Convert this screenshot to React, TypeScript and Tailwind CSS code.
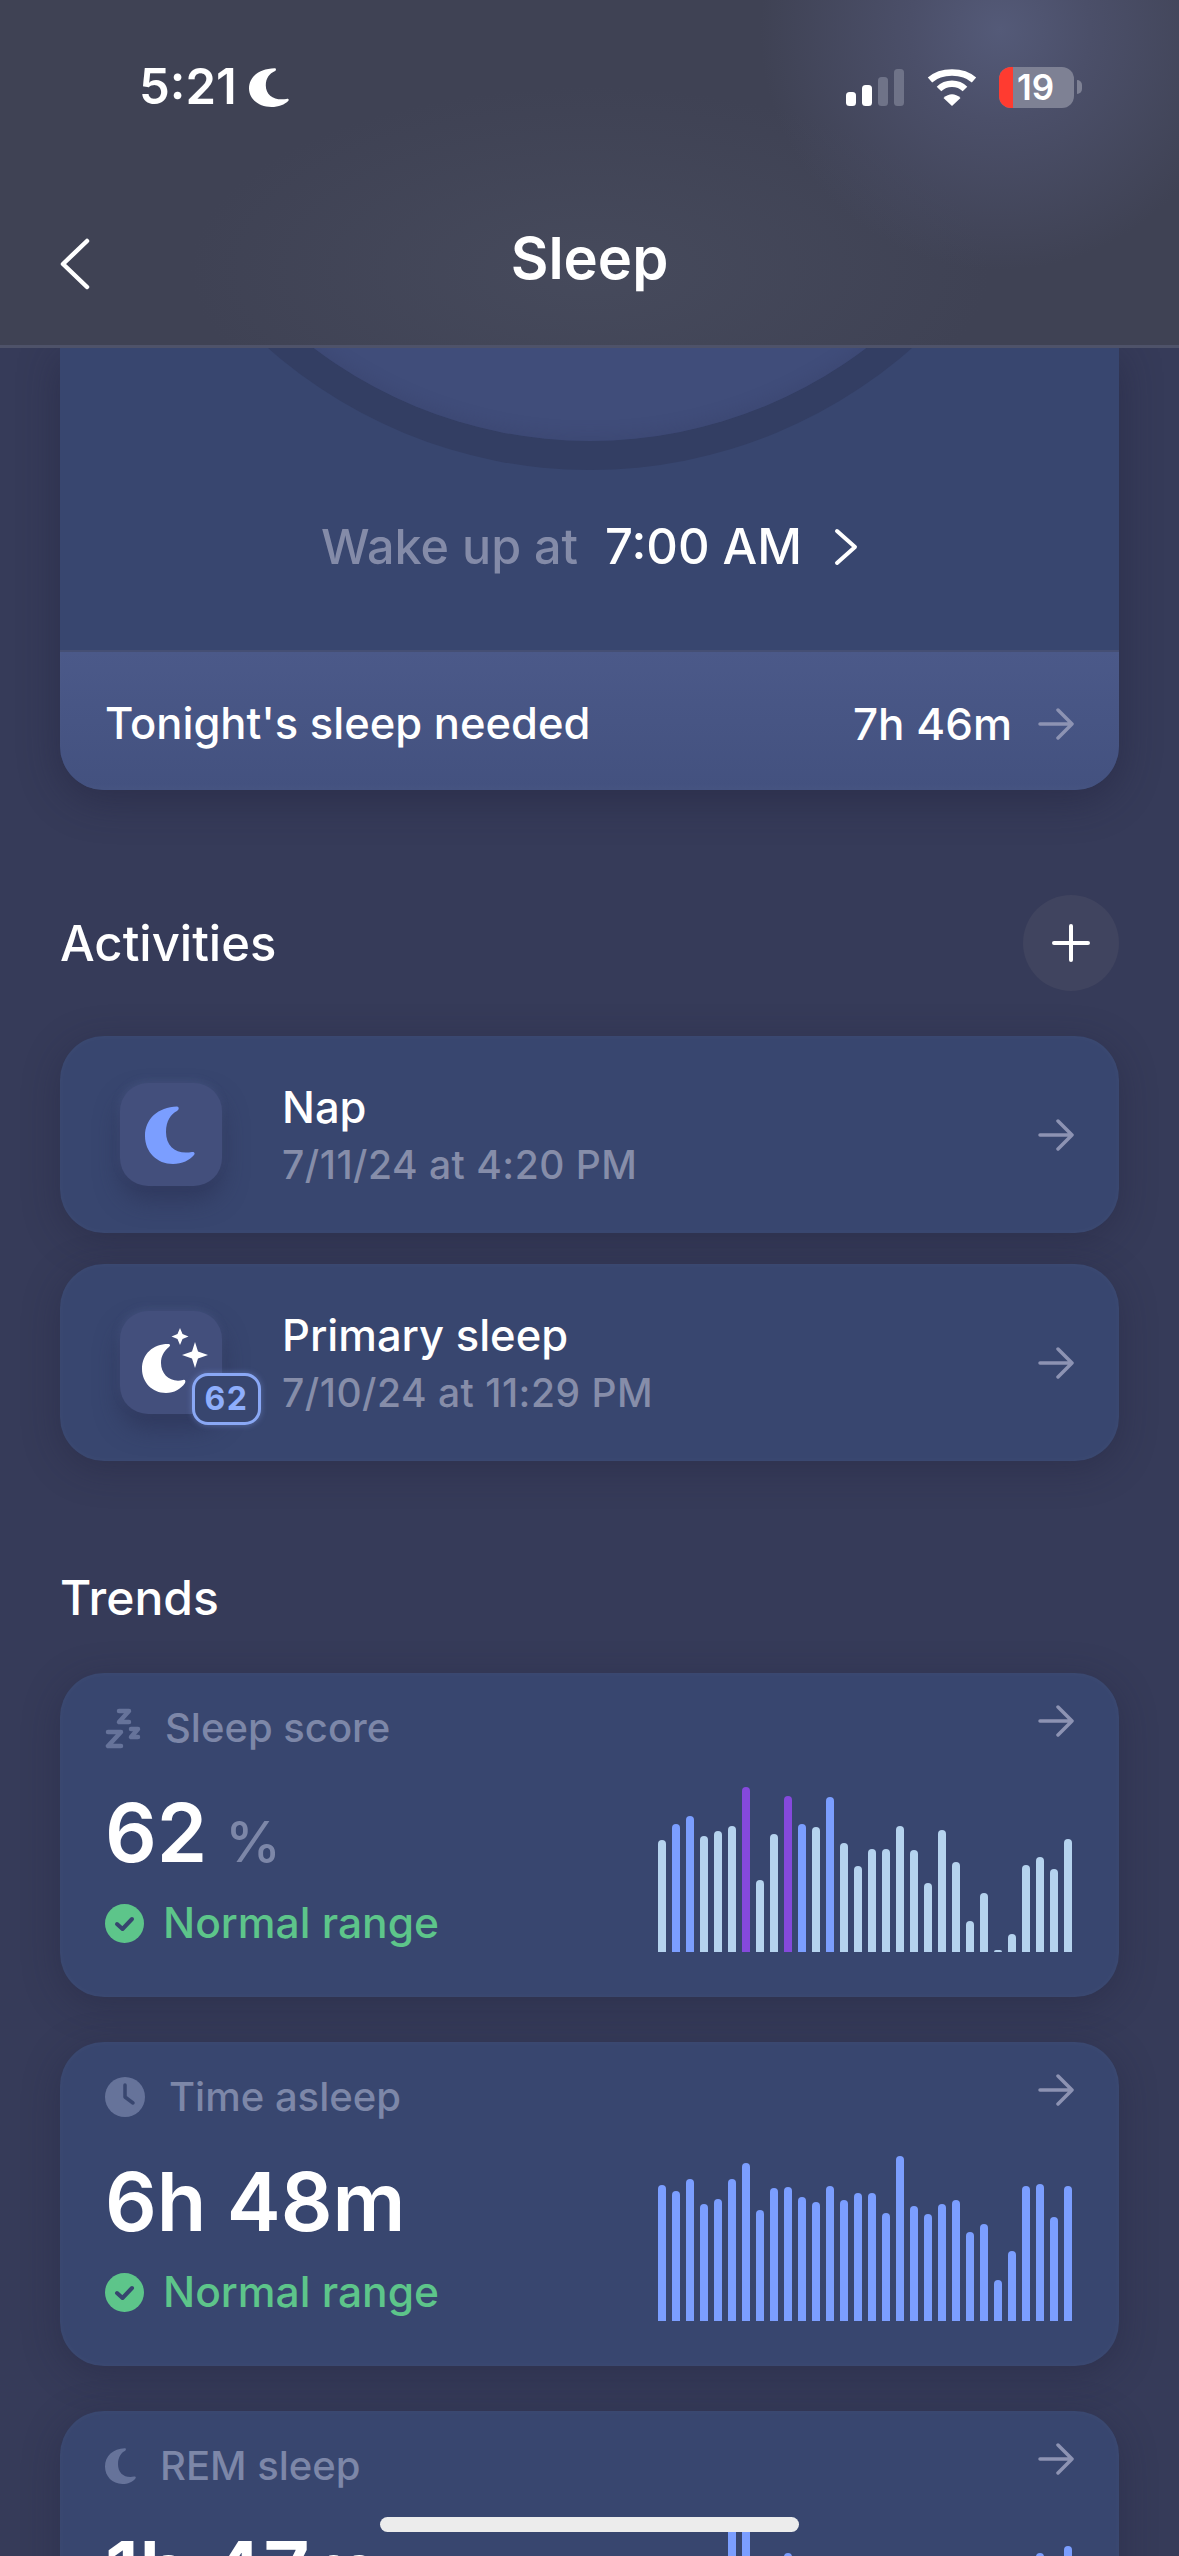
import type { JSX, ReactNode } from 'react'

const SCORE_BARS = [112, 128, 136, 116, 121, 126, 165, 72, 118, 156, 128, 125, 155, 109, 86, 103, 103, 126, 102, 69, 122, 90, 31, 59, 2, 18, 87, 95, 83, 113]
const SCORE_BLUE = [1, 2, 10, 12]
const SCORE_PURPLE = [6, 9]
const ASLEEP_BARS = [136, 130, 142, 117, 122, 142, 158, 111, 133, 134, 124, 119, 135, 121, 128, 128, 108, 165, 115, 107, 117, 121, 89, 97, 41, 70, 135, 137, 104, 135]
const REM_BARS = [90, 100, 80, 110, 95, 165, 165, 70, 100, 137, 90, 85, 100, 70, 110, 90, 80, 100, 95, 60, 80, 100, 50, 70, 60, 90, 110, 137, 80, 144]

function BarChart({ bars, colorAt }: { bars: number[]; colorAt: (i: number) => string }): JSX.Element {
  return (
    <div className="flex h-[165px] items-end gap-[5.5px]">
      {bars.map((h, i) => (
        <div key={i} className={`w-[8.5px] rounded-t-full ${colorAt(i)}`} style={{ height: h }} />
      ))}
    </div>
  )
}

function ArrowRight(): JSX.Element {
  return (
    <svg width="36" height="32" viewBox="0 0 36 32" fill="none" stroke="#8d93b3" strokeWidth="3.5" strokeLinecap="round" strokeLinejoin="round">
      <path d="M2 16H34M20 2L34 16L20 30" />
    </svg>
  )
}

function CheckBadge(): JSX.Element {
  return (
    <svg width="39" height="39" viewBox="0 0 39 39">
      <circle cx="19.5" cy="19.5" r="19.5" fill="#5dc58a" />
      <path d="M12 20L17.5 25L27 15" fill="none" stroke="#37456f" strokeWidth="4" strokeLinecap="round" strokeLinejoin="round" />
    </svg>
  )
}

function ZzzIcon(): JSX.Element {
  return (
    <svg width="36" height="41" viewBox="0 0 36 41" fill="none" stroke="#66739a" strokeWidth="4.5" strokeLinejoin="round" strokeLinecap="round">
      <path d="M14 3H24L14 14H24" />
      <path d="M26 21H33L26 29H33" />
      <path d="M3 24H16L3 38H16" />
    </svg>
  )
}

function ClockIcon(): JSX.Element {
  return (
    <svg width="40" height="40" viewBox="0 0 40 40">
      <circle cx="20" cy="20" r="20" fill="#66739a" />
      <path d="M20 8V20L28 26" fill="none" stroke="#38466f" strokeWidth="3.5" strokeLinecap="round" strokeLinejoin="round" />
    </svg>
  )
}

function Crescent({ className, color }: { className: string; color: string }): JSX.Element {
  return (
    <svg className={className} viewBox="0 0 50 58" fill={color} preserveAspectRatio="none">
      <path d="M32 0.5C13 1 0 13 0 30C0 46 12 58 28 58C37 58 45 54 49 49C50.5 47 49 45.5 47 46C32 49 21 41 21 26C21 15 26 8 32 5C34.5 3.5 34 0.5 32 0.5Z" />
    </svg>
  )
}

function SparkleMoon(): JSX.Element {
  return (
    <svg width="68" height="65" viewBox="0 0 68 65" fill="white">
      <path d="M27 16C12 16 1 26 1 41C1 54 11 65 25 65C33 65 40 61 44 55C45 53 44 51 42 52C30 55 20 47 20 35C20 28 23 23 28 19C30 17 29 16 27 16Z" />
      <path d="M39 0L41.5 6L47.5 8.5L41.5 11L39 17L36.5 11L30.5 8.5L36.5 6Z" />
      <path d="M54 14L57 23.5L67 27L57 30.5L54 40L51 30.5L41 27L51 23.5Z" />
    </svg>
  )
}

function ActivityRow({ icon, title, when }: { icon: ReactNode; title: string; when: string }): JSX.Element {
  return (
    <div className="flex h-[197px] items-center rounded-[44px] bg-[#38466f] pr-[45px] pl-[60px] shadow-[0_8px_36px_rgba(32,32,58,0.35),inset_0_0_8px_rgba(255,255,255,0.03)]">
      <div className="relative flex h-[103px] w-[102px] shrink-0 items-center justify-center rounded-[28px] bg-[#434f7c] shadow-[0_14px_24px_rgba(40,45,80,0.55),-1px_-2px_8px_rgba(110,125,180,0.2)]">
        {icon}
      </div>
      <div className="ml-[60px] flex-1">
        <div className="text-[43.5px] leading-[52px] font-medium text-white">{title}</div>
        <div className="mt-[9px] text-[39px] leading-[46px] tracking-[0.5px] font-medium text-[#868da9]">{when}</div>
      </div>
      <ArrowRight />
    </div>
  )
}

function TrendCard({ icon, label, value, chart }: { icon: ReactNode; label: string; value: ReactNode; chart: ReactNode }): JSX.Element {
  return (
    <div className="flex h-[324px] shrink-0 flex-col rounded-[44px] bg-[#38466f] pt-[35px] pr-[47px] pl-[45px] shadow-[0_8px_36px_rgba(32,32,58,0.35),inset_0_0_8px_rgba(255,255,255,0.03)]">
      <div className="flex h-[40px] items-center justify-between">
        <div className="flex items-center">
          {icon}
          <span className="text-[40px] font-medium text-[#7d87a8]">{label}</span>
        </div>
        <div className="mt-[-14px] mr-[-2px]">
          <ArrowRight />
        </div>
      </div>
      <div className="mt-[2px] flex items-start justify-between">
        <div>
          <div className="mt-[38px] flex h-[90px] items-baseline text-[81px] leading-[90px] font-semibold text-white">{value}</div>
          <div className="mt-[20px] flex items-center gap-[19px] text-[42.5px] leading-[50px] font-medium text-[#5dc58a]">
            <CheckBadge />
            Normal range
          </div>
        </div>
        <div className="mt-[37px]">{chart}</div>
      </div>
    </div>
  )
}

export default function App(): JSX.Element {
  return (
    <div className="relative flex h-[2556px] w-[1179px] flex-col overflow-hidden bg-[#363b59] font-['Inter',sans-serif]">
      {/* top bar */}
      <div className="relative z-10 h-[348px] shrink-0 border-b-[3px] border-[#4e5269] bg-[#3f4254] bg-[radial-gradient(circle_at_1000px_30px,#545a78_0,#4b4f69_90px,rgba(63,66,84,0)_240px),radial-gradient(ellipse_at_590px_270px,#464a5c_0,rgba(63,66,84,0)_400px)]">
        <div className="flex h-[174px] items-center justify-between pr-[97px] pl-[139px]">
          <div className="flex items-center gap-[12px]">
            <span className="text-[49px] font-semibold text-white">5:21</span>
            <Crescent className="h-[39px] w-[40px]" color="white" />
          </div>
          <div className="flex items-center">
            <svg width="58" height="37" viewBox="0 0 58 37">
              <rect x="0" y="23" width="10" height="14" rx="3.5" fill="white" />
              <rect x="16" y="16" width="10" height="21" rx="3.5" fill="white" />
              <rect x="32" y="8" width="10" height="29" rx="3.5" fill="#6f7388" />
              <rect x="48" y="0" width="10" height="37" rx="3.5" fill="#6f7388" />
            </svg>
            <svg className="ml-[23px]" width="50" height="37" viewBox="0 0 50 37" fill="none" stroke="white" strokeWidth="6.5">
              <path d="M3 11C14 1 36 1 47 11" />
              <path d="M12 20C19 13 31 13 38 20" />
              <path d="M16.5 29L25 37L33.5 29C28 24 22 24 16.5 29Z" fill="white" stroke="none" />
            </svg>
            <div className="ml-[22px] flex h-[41px] w-[75px] items-center overflow-hidden rounded-[12px] bg-[#7e8194]">
              <div className="h-full w-[14px] shrink-0 bg-[#ff3b30]" />
              <span className="ml-[4px] text-[35px] leading-none font-semibold text-white">19</span>
            </div>
            <div className="ml-[3px] h-[14px] w-[5px] rounded-r-full bg-[#7e8194]" />
          </div>
        </div>
        <div className="relative flex h-[170px] justify-center pt-[49px]">
          <svg className="absolute top-[64px] left-[60px]" width="30" height="52" viewBox="0 0 30 52" fill="none" stroke="white" strokeWidth="4.5" strokeLinecap="round" strokeLinejoin="round">
            <path d="M27 3L3 26L27 49" />
          </svg>
          <span className="text-[58px] leading-[70px] font-semibold text-white">Sleep</span>
        </div>
      </div>

      <div className="flex flex-col px-[60px]">
        {/* tonight card */}
        <div className="flex h-[442px] shrink-0 flex-col overflow-hidden rounded-b-[44px] bg-[#38466f] shadow-[0_10px_40px_rgba(32,32,58,0.45)]">
          <div className="flex h-[122px] shrink-0 justify-center overflow-hidden">
            <div className="-mt-[850px] flex h-[972px] w-[972px] shrink-0 items-center justify-center rounded-full bg-[#333e63]">
              <div className="h-[914px] w-[914px] rounded-full bg-[#404d7a] shadow-[inset_0_-6px_14px_rgba(50,60,100,0.25)]" />
            </div>
          </div>
          <div className="flex h-[180px] shrink-0 items-start justify-center pt-[49px]">
            <span className="text-[48.5px] leading-[56px] font-medium text-[#848ba8]">Wake up at</span>
            <span className="ml-[27px] text-[49px] leading-[56px] font-medium text-white">7:00 AM</span>
            <svg className="mt-[9px] ml-[32px]" width="24" height="38" viewBox="0 0 24 38" fill="none" stroke="white" strokeWidth="4" strokeLinecap="round" strokeLinejoin="round">
              <path d="M3 3L21 19L3 35" />
            </svg>
          </div>
          <div className="flex flex-1 items-center justify-between border-t-[2px] border-[#454f74] bg-gradient-to-b from-[#4b5989] to-[#43517f] pt-[6px] pr-[45px] pl-[45px] shadow-[inset_0_-4px_6px_rgba(255,255,255,0.02)]">
            <span className="text-[43.5px] font-medium text-white">Tonight's sleep needed</span>
            <div className="flex items-center gap-[26px]">
              <span className="text-[44px] font-medium text-white">7h 46m</span>
              <ArrowRight />
            </div>
          </div>
        </div>

        {/* activities */}
        <div className="mt-[105px] flex h-[96px] shrink-0 items-center justify-between">
          <h2 className="pt-[2px] text-[49px] font-medium text-white">Activities</h2>
          <div className="flex h-[96px] w-[96px] items-center justify-center rounded-full bg-[#40445f]">
            <svg width="38" height="38" viewBox="0 0 38 38" fill="none" stroke="white" strokeWidth="4" strokeLinecap="round">
              <path d="M19 2V36M2 19H36" />
            </svg>
          </div>
        </div>
        <div className="mt-[45px] flex flex-col gap-[31px]">
          <ActivityRow icon={<Crescent className="mr-[2px] h-[58px] w-[50px]" color="#7b9eff" />} title="Nap" when="7/11/24 at 4:20 PM" />
          <ActivityRow
            icon={
              <>
                <div className="-mt-[4px] ml-[8px]">
                  <SparkleMoon />
                </div>
                <div className="absolute top-[62px] left-[72px] flex h-[52px] w-[69px] items-center justify-center rounded-[16px] border-[3px] border-[#8aa8f5] bg-[#38466f] text-[32px] font-bold tracking-[1.5px] text-[#8eaefc] shadow-[0_0_6px_rgba(138,168,245,0.4)]">
                  62
                </div>
              </>
            }
            title="Primary sleep"
            when="7/10/24 at 11:29 PM"
          />
        </div>

        {/* trends */}
        <h2 className="mt-[107px] text-[48px] leading-[60px] font-medium text-white">Trends</h2>
        <div className="mt-[45px] flex flex-col gap-[45px]">
          <TrendCard
            icon={
              <div className="mr-[24px]">
                <ZzzIcon />
              </div>
            }
            label="Sleep score"
            value={
              <>
                62<span className="ml-[18px] text-[56px] font-medium text-[#7d87a8]">%</span>
              </>
            }
            chart={<BarChart bars={SCORE_BARS} colorAt={(i) => (SCORE_PURPLE.includes(i) ? 'bg-[#8549dc]' : SCORE_BLUE.includes(i) ? 'bg-[#7b9eff]' : 'bg-[#b5d3ee]')} />}
          />
          <TrendCard
            icon={
              <div className="mr-[24px]">
                <ClockIcon />
              </div>
            }
            label="Time asleep"
            value="6h 48m"
            chart={<BarChart bars={ASLEEP_BARS} colorAt={() => 'bg-[#7b9eff]'} />}
          />
          <TrendCard
            icon={<Crescent className="mr-[24px] h-[36px] w-[31px]" color="#66739a" />}
            label="REM sleep"
            value="1h 47m"
            chart={<BarChart bars={REM_BARS} colorAt={() => 'bg-[#7b9eff]'} />}
          />
        </div>
      </div>

      {/* home indicator */}
      <div className="absolute top-[2517px] left-[380px] z-20 h-[15px] w-[419px] rounded-full bg-[#ececec]" />
    </div>
  )
}
